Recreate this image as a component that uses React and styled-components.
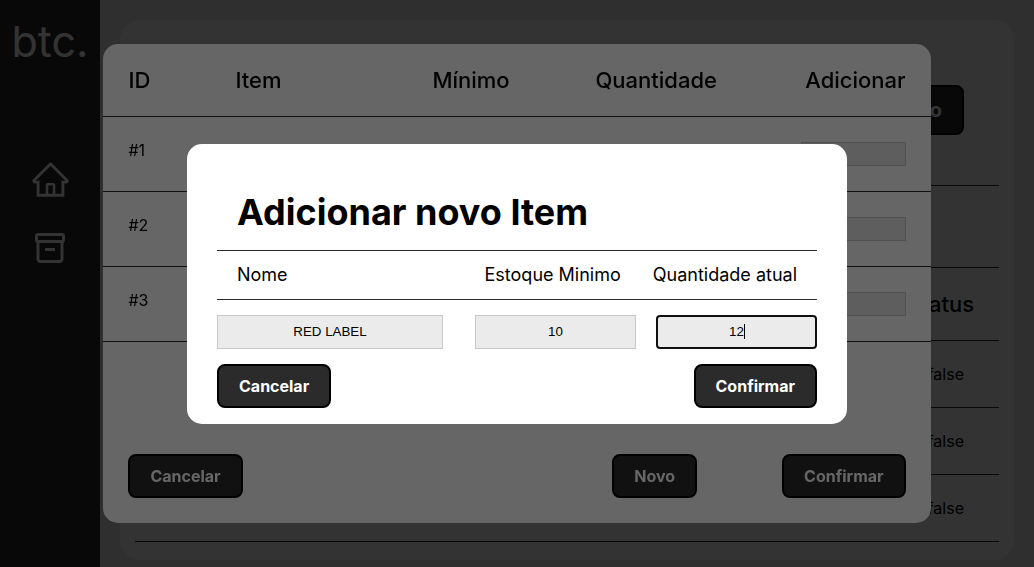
import React, { useState } from "react";
import styled, { createGlobalStyle, css } from "styled-components";
import { AiOutlineHome } from "react-icons/ai";

const GlobalStyle = createGlobalStyle`
  * { box-sizing: border-box; margin: 0; padding: 0; }
  body {
    background: #ebebeb;
    color: #000;
    font-family: Inter, "Liberation Sans", sans-serif;
    font-size: 16px;
    overflow: hidden;
  }
`;

const Page = styled.div`
  display: flex;
  min-height: 100vh;
`;

const Sidebar = styled.aside`
  flex: 0 0 100px;
  display: flex;
  flex-direction: column;
  align-items: center;
  background: #2b2b2b;
  color: #fff;
`;

const Logo = styled.div`
  margin-top: 14px;
  font-size: 43px;
  line-height: 54px;
`;

const Nav = styled.nav`
  display: flex;
  flex-direction: column;
  align-items: center;
  gap: 33px;
  margin-top: 91px;
`;

const NavLink = styled.a`
  display: flex;
  color: inherit;
`;

const Main = styled.main`
  flex: 1;
  min-width: 0;
  padding: 20px 20px 0;
`;

const Panel = styled.section`
  padding: 15px 15px 18px;
  border-radius: 20px;
  background: #fff;
`;

const PanelHeader = styled.header`
  display: flex;
  justify-content: flex-end;
  padding: 50px 35px;
  border-bottom: 1px solid #2b2b2b;
`;

const Filters = styled.div`
  height: 82px;
  border-bottom: 1px solid #2b2b2b;
`;

const Button = styled.button`
  padding: 10px 20px;
  border: 2px solid #000;
  border-radius: 8px;
  background: #2b2b2b;
  color: #fff;
  font-family: inherit;
  font-weight: 700;
  font-size: ${(p) => (p.$large ? "20px" : "16px")};
  line-height: ${(p) => (p.$large ? "26px" : "20px")};
`;

const Table = styled.table`
  width: 100%;
  border-collapse: separate;
  border-spacing: 0;
  table-layout: fixed;
`;

const Column = styled.col`
  width: ${(p) => p.$width || "auto"};
`;

const HeadCell = styled.th`
  height: 73px;
  border-bottom: 1px solid #2b2b2b;
  font-size: 22px;
  line-height: 26px;
  font-weight: 500;
  text-align: ${(p) => p.$align || "left"};
  &:first-child { padding-left: 25px; }
  &:last-child { padding-right: 25px; }
`;

const StatusCell = styled.td`
  height: 67px;
  padding-right: 35px;
  border-bottom: 1px solid #2b2b2b;
  text-align: right;
`;

const StockCell = styled.td`
  height: 75px;
  padding-top: 25px;
  border-bottom: 1px solid #2b2b2b;
  line-height: 16px;
  vertical-align: top;
  &:first-child { padding-left: 25px; }
  &:last-child { padding-right: 25px; }
`;

const Overlay = styled.div`
  position: fixed;
  inset: 0;
  display: flex;
  align-items: center;
  justify-content: center;
  background: rgba(0, 0, 0, ${(p) => p.$shade});
`;

const StockDialog = styled.section`
  width: 80%;
  border-radius: 15px;
  background: #fff;
`;

const StockList = styled.div`
  min-height: 385px;
`;

const Actions = styled.footer`
  display: flex;
  justify-content: space-between;
  padding: ${(p) => (p.$flush ? "0" : "25px")};
`;

const ActionGroup = styled.div`
  display: flex;
  gap: 85px;
`;

const field = css`
  border: 1px solid #c8c8c8;
  background: #ebebeb;
  color: #000;
  font-family: "Liberation Sans", Arial, sans-serif;
  text-align: center;
`;

const AmountInput = styled.input`
  ${field}
  display: block;
  width: 105px;
  height: 24px;
  margin-left: auto;
`;

const ItemDialog = styled.form`
  width: 660px;
  max-width: 94%;
  padding: 40px 30px 16px;
  border-radius: 15px;
  background: #fff;
`;

const Title = styled.h2`
  padding: 6px 20px 16px;
  border-bottom: 1px solid #2b2b2b;
  font-size: 36px;
  line-height: 44px;
  font-weight: 700;
`;

const LabelRow = styled.div`
  display: flex;
  gap: 32px;
  padding: 12px 20px;
  border-bottom: 1px solid #2b2b2b;
  font-size: 18px;
  line-height: 24px;
`;

const Label = styled.label`
  &:first-child { margin-right: auto; }
`;

const FieldRow = styled.div`
  display: flex;
  gap: 20px;
  padding: 15px 0;
`;

const Field = styled.div`
  position: relative;
  display: flex;
  flex: ${(p) => (p.$wide ? "1 1 226px" : "0 0 161px")};
  margin-right: ${(p) => (p.$wide ? "12px" : "0")};
`;

const FieldInput = styled.input`
  ${field}
  width: 100%;
  height: 34px;
  ${(p) =>
    p.$active &&
    css`
      border: 2px solid #101010;
      border-radius: 4px;
      outline: none;
      caret-color: transparent;
    `}
`;

const Caret = styled.span`
  position: absolute;
  top: 9px;
  left: 50%;
  width: 1px;
  height: 15px;
  margin-left: 7px;
  background: #000;
`;

const ArchiveIcon = () => (
  <svg width="30" height="30" viewBox="0 0 30 30" fill="none" stroke="currentColor" strokeWidth="3">
    <rect x="1.5" y="1.5" width="27" height="7" rx="1.5" />
    <path d="M3 8.5V26a2.5 2.5 0 0 0 2.5 2.5h19A2.5 2.5 0 0 0 27 26V8.5" />
    <path d="M10 16.5h10" />
  </svg>
);

const stockIds = [1, 2, 3];

export default function App() {
  const [item, setItem] = useState({ nome: "RED LABEL", minimo: "10", atual: "12" });
  const change = (e) => setItem({ ...item, [e.target.name]: e.target.value });

  return (
    <>
      <GlobalStyle />
      <Page>
        <Sidebar>
          <Logo>btc.</Logo>
          <Nav>
            <NavLink href="#inicio" aria-label="Início">
              <AiOutlineHome size={41} />
            </NavLink>
            <NavLink href="#estoque" aria-label="Estoque">
              <ArchiveIcon />
            </NavLink>
          </Nav>
        </Sidebar>
        <Main>
          <Panel>
            <PanelHeader>
              <Button $large type="button">Novo</Button>
            </PanelHeader>
            <Filters />
            <Table>
              <thead>
                <tr>
                  <HeadCell $align="right">Status</HeadCell>
                </tr>
              </thead>
              <tbody>
                {stockIds.map((id) => (
                  <tr key={id}>
                    <StatusCell>false</StatusCell>
                  </tr>
                ))}
              </tbody>
            </Table>
          </Panel>
        </Main>
      </Page>

      <Overlay $shade={0.5}>
        <StockDialog role="dialog" aria-label="Estoque">
          <StockList>
            <Table>
              <colgroup>
                <Column $width="132px" />
                <Column $width="197px" />
                <Column $width="163px" />
                <Column />
                <Column />
              </colgroup>
              <thead>
                <tr>
                  <HeadCell>ID</HeadCell>
                  <HeadCell>Item</HeadCell>
                  <HeadCell>Mínimo</HeadCell>
                  <HeadCell>Quantidade</HeadCell>
                  <HeadCell $align="right">Adicionar</HeadCell>
                </tr>
              </thead>
              <tbody>
                {stockIds.map((id) => (
                  <tr key={id}>
                    <StockCell>#{id}</StockCell>
                    <StockCell />
                    <StockCell />
                    <StockCell />
                    <StockCell>
                      <AmountInput aria-label={`Adicionar #${id}`} />
                    </StockCell>
                  </tr>
                ))}
              </tbody>
            </Table>
          </StockList>
          <Actions>
            <Button type="button">Cancelar</Button>
            <ActionGroup>
              <Button type="button">Novo</Button>
              <Button type="button">Confirmar</Button>
            </ActionGroup>
          </Actions>
        </StockDialog>
      </Overlay>

      <Overlay $shade={0.6}>
        <ItemDialog role="dialog" aria-labelledby="titulo" onSubmit={(e) => e.preventDefault()}>
          <Title id="titulo">Adicionar novo Item</Title>
          <LabelRow>
            <Label htmlFor="nome">Nome</Label>
            <Label htmlFor="minimo">Estoque Minimo</Label>
            <Label htmlFor="atual">Quantidade atual</Label>
          </LabelRow>
          <FieldRow>
            <Field $wide>
              <FieldInput id="nome" name="nome" value={item.nome} onChange={change} />
            </Field>
            <Field>
              <FieldInput id="minimo" name="minimo" value={item.minimo} onChange={change} />
            </Field>
            <Field>
              <FieldInput $active id="atual" name="atual" value={item.atual} onChange={change} />
              <Caret />
            </Field>
          </FieldRow>
          <Actions $flush>
            <Button type="button">Cancelar</Button>
            <Button type="submit">Confirmar</Button>
          </Actions>
        </ItemDialog>
      </Overlay>
    </>
  );
}
